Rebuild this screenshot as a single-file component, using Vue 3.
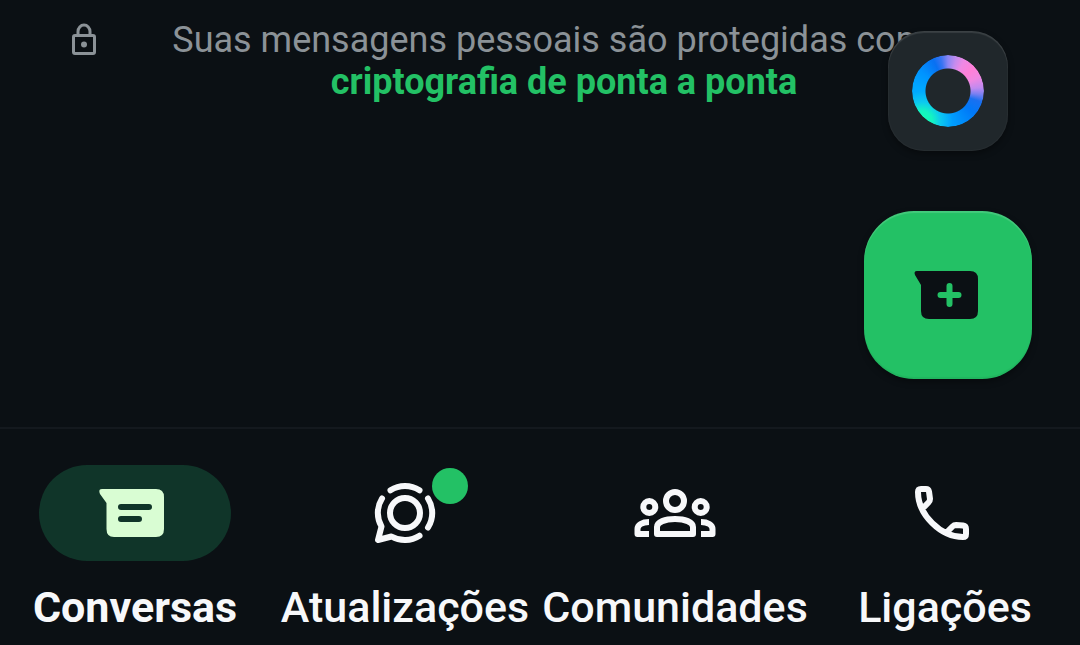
<script setup>
const tabs = [
  { id: 'chats', label: 'Conversas', active: true },
  { id: 'updates', label: 'Atualizações', badge: true },
  { id: 'communities', label: 'Comunidades' },
  { id: 'calls', label: 'Ligações' },
]
</script>

<template>
  <div class="screen">
    <main class="content">
      <div class="notice">
        <svg class="lock" viewBox="0 0 24 32" aria-hidden="true">
          <path d="M6 12V8.500a6 6.500 0 0 1 12 0V12" fill="none" stroke="currentColor" stroke-width="3" />
          <rect x="1.500" y="12.500" width="21" height="18" rx="1.500" fill="none" stroke="currentColor" stroke-width="3" />
          <circle cx="12" cy="21.500" r="3" fill="currentColor" />
        </svg>
        <p class="notice-text">
          Suas mensagens pessoais são protegidas com a
          <a class="notice-link" href="#">criptografia de ponta a ponta</a>
        </p>
      </div>

      <div class="actions">
        <button class="assistant" type="button" aria-label="Meta AI">
          <span class="ring"></span>
        </button>
        <button class="compose" type="button" aria-label="Nova conversa">
          <svg class="icon" viewBox="0 0 96 96" aria-hidden="true">
            <path d="M17 24H70Q78 24 78 32V64Q78 72 70 72H29Q21 72 21 64V38L15 28Q13.500 24 17 24Z" fill="#0b1014" />
            <path d="M40.500 48H58.500M49.500 39V57" stroke="#23c165" stroke-width="6" stroke-linecap="round" />
          </svg>
        </button>
      </div>
    </main>

    <nav class="tabs">
      <a v-for="tab in tabs" :key="tab.id" class="tab" :class="{ active: tab.active }" href="#">
        <span class="pill">
          <svg class="icon" viewBox="0 0 96 96" aria-hidden="true" fill="none" stroke="currentColor" stroke-width="6" stroke-linecap="round" stroke-linejoin="round">
            <template v-if="tab.id === 'chats'">
              <path d="M15 24H69Q77 24 77 32V64Q77 72 69 72H27Q19.500 72 19.500 64V38L13 29Q11 24 15 24Z" fill="#d9fdd3" stroke="none" />
              <path d="M34 42H62M34 54H52" stroke="#103529" />
            </template>
            <template v-else-if="tab.id === 'updates'">
              <circle cx="48" cy="48" r="15" />
              <path d="M33.500 25.300A27 27 0 0 1 62.500 25.300M71 33.500A27 27 0 0 1 71 62.500M25 33.500A27 27 0 0 0 24.500 61.500L21 75L34.500 71.500A27 27 0 0 0 62.500 70.700" />
            </template>
            <template v-else-if="tab.id === 'communities'">
              <circle cx="48" cy="36" r="9" />
              <circle cx="22.300" cy="42" r="6" />
              <circle cx="73.700" cy="42" r="6" />
              <path d="M30 69V62C30 57 38 54 48 54S66 57 66 62V69Z" />
              <path d="M22 57C15 57 10.500 60 10.500 64V69H22M74 57C81 57 85.500 60 85.500 64V69H74" stroke-linecap="butt" />
            </template>
            <path v-else d="M21 27Q21 24 24 24H29Q31.500 24 32 26.500L33 34Q33 36 31.500 37.500L26 43M21 27C21 50 44 72 66 72Q69 72 69 69V64Q69 61 66 60.500L59 60Q57 60 55.500 61.500L50 67" />
          </svg>
          <span v-if="tab.badge" class="badge"></span>
        </span>
        <span class="label">{{ tab.label }}</span>
      </a>
    </nav>
  </div>
</template>

<style>
body {
  margin: 0;
  background: #0b1014;
}
</style>

<style scoped>
.screen {
  display: flex;
  flex-direction: column;
  min-height: 100vh;
  background: #0b1014;
  font-family: Roboto, "Liberation Sans", sans-serif;
  overflow: hidden;
}
.content {
  position: relative;
  flex: 1;
}
.notice {
  display: flex;
  align-items: flex-start;
  padding: 19px 48px 0 72px;
  color: #8b9297;
}
.lock {
  flex: none;
  width: 24px;
  height: 32px;
  margin-top: 4px;
}
.notice-text {
  flex: 1;
  margin: 0;
  padding: 0 60px;
  font-size: 36px;
  line-height: 42px;
  text-align: center;
}
.notice-link {
  display: block;
  color: #23c165;
  font-weight: 700;
  text-decoration: none;
}
.actions {
  position: absolute;
  right: 48px;
  bottom: 48px;
  display: flex;
  flex-direction: column;
  align-items: center;
  gap: 60px;
}
.assistant,
.compose {
  display: flex;
  align-items: center;
  justify-content: center;
  padding: 0;
  border: 0;
  cursor: pointer;
}
.assistant {
  width: 120px;
  height: 120px;
  border-radius: 36px;
  background: #20272b;
  box-shadow: 0 3px 6px rgba(0, 0, 0, 0.35), inset 0 2px 1px rgba(255, 255, 255, 0.1), inset 0 0 2px rgba(255, 255, 255, 0.1);
}
.ring {
  width: 72px;
  height: 72px;
  border-radius: 50%;
  background:
    radial-gradient(circle at 10px 66px, #14ffb4 0, #14f5c0 10px, rgba(20, 220, 230, 0.6) 19px, rgba(0, 168, 255, 0) 30px),
    conic-gradient(#8a86f4 0deg, #c48cee 14deg, #ee88e4 28deg, #ff80d8 48deg, #f088e2 66deg, #c08af0 84deg, #7a80f2 96deg, #1a70f0 108deg, #0078f8 130deg, #00a0ff 175deg, #00b0ff 225deg, #00a8ff 275deg, #0094ff 305deg, #0870f2 335deg, #3a74f2 348deg, #8a86f4 360deg);
  mask: radial-gradient(circle, transparent 22px, #000 23px);
}
.compose {
  width: 168px;
  height: 168px;
  border-radius: 50px;
  background: #23c165;
  box-shadow: 0 3px 6px rgba(0, 0, 0, 0.35), inset 0 2px 1px rgba(255, 255, 255, 0.15), inset 0 -2px 1px rgba(0, 0, 0, 0.06);
}
.icon {
  display: block;
  width: 96px;
  height: 96px;
}
.tabs {
  display: grid;
  grid-template-columns: repeat(4, 1fr);
  padding: 36px 0 12px;
  border-top: 2px solid #14191e;
}
.tab {
  display: flex;
  flex-direction: column;
  align-items: center;
  gap: 20px;
  color: #f7f8fa;
  text-decoration: none;
}
.pill {
  position: relative;
  display: flex;
  justify-content: center;
  width: 192px;
  border-radius: 48px;
}
.active .pill {
  background: #103529;
}
.badge {
  position: absolute;
  top: 3px;
  right: 33px;
  width: 36px;
  height: 36px;
  border-radius: 50%;
  background: #23c165;
}
.label {
  font-size: 43px;
  line-height: 52px;
  font-weight: 500;
  white-space: nowrap;
}
.active .label {
  font-weight: 700;
}
</style>
